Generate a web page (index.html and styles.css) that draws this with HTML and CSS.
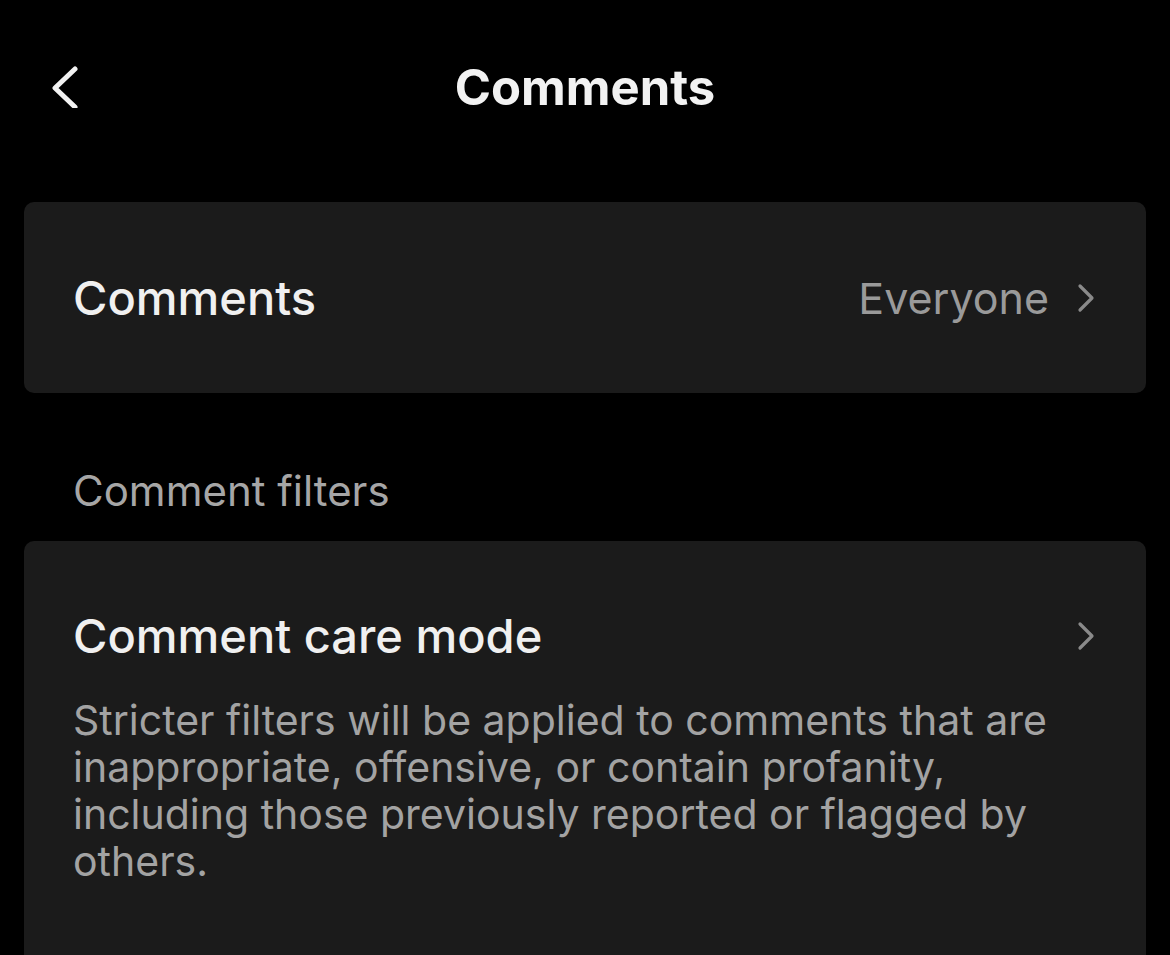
FILE: index.html
```html
<!DOCTYPE html>
<html lang="en">

<head>
    <meta charset="UTF-8" />
    <meta name="viewport" content="width=device-width, initial-scale=1.0" />
    <title>Comments</title>
    <link rel="stylesheet" href="styles.css">
</head>

<body>

    <header class="top-bar">
        <button class="back-btn" aria-label="Back">
            <svg width="34" height="44" viewBox="0 0 34 44">
                <path d="M27 5 L7 24 L27 43" fill="none" stroke="#f2f2f2" stroke-width="5" stroke-linecap="round" stroke-linejoin="round" />
            </svg>
        </button>
        <h1>Comments</h1>
    </header>

    <main class="content">
        <div class="card row-card">
            <span class="row-title">Comments</span>
            <span class="row-value">Everyone
                <svg class="chevron" width="20" height="30" viewBox="0 0 20 30">
                    <path d="M4 3 L16 15 L4 27" fill="none" stroke="#8a8a8a" stroke-width="3.2" stroke-linecap="round" stroke-linejoin="round" />
                </svg>
            </span>
        </div>

        <p class="section-label">Comment filters</p>

        <div class="card filter-card">
            <div class="filter-head">
                <span class="row-title">Comment care mode</span>
                <svg class="chevron" width="20" height="30" viewBox="0 0 20 30">
                    <path d="M4 3 L16 15 L4 27" fill="none" stroke="#8a8a8a" stroke-width="3.2" stroke-linecap="round" stroke-linejoin="round" />
                </svg>
            </div>
            <p class="filter-desc">Stricter filters will be applied to comments that are inappropriate, offensive, or contain profanity, including those previously reported or flagged by others.</p>
        </div>
    </main>

</body>

</html>
```

FILE: styles.css
```css
* {
    box-sizing: border-box;
    margin: 0;
    padding: 0;
    font-family: 'Inter', 'Roboto', sans-serif;
}

body {
    background: #000;
    color: #f0f0f0;
    height: 100vh;
    overflow: hidden;
}

.top-bar {
    position: relative;
    height: 176px;
    display: flex;
    align-items: center;
    justify-content: center;
}

.top-bar h1 {
    font-size: 49px;
    font-weight: 700;
    color: #f2f2f2;
    margin-bottom: 2px;
}

.back-btn {
    position: absolute;
    left: 48px;
    top: 64px;
    background: none;
    border: none;
    display: flex;
}

.content {
    padding: 26px 24px 0;
}

.card {
    background: #1b1b1b;
    border-radius: 10px;
}

.row-card {
    height: 191px;
    display: flex;
    align-items: center;
    justify-content: space-between;
    padding: 0 50px 0 49px;
}

.row-title {
    font-size: 47px;
    font-weight: 500;
    color: #f0f0f0;
}

.row-value {
    display: flex;
    align-items: center;
    gap: 27px;
    font-size: 43px;
    color: #9a9a9a;
}

.section-label {
    font-size: 42px;
    color: #a6a6a6;
    padding: 74px 49px 26px;
    line-height: 48px;
}

.filter-card {
    padding: 66px 50px 80px 49px;
    min-height: 420px;
}

.filter-head {
    display: flex;
    align-items: center;
    justify-content: space-between;
}

.filter-desc {
    margin-top: 33px;
    font-size: 41px;
    line-height: 47px;
    color: #a3a3a3;
    padding-right: 40px;
}
```
